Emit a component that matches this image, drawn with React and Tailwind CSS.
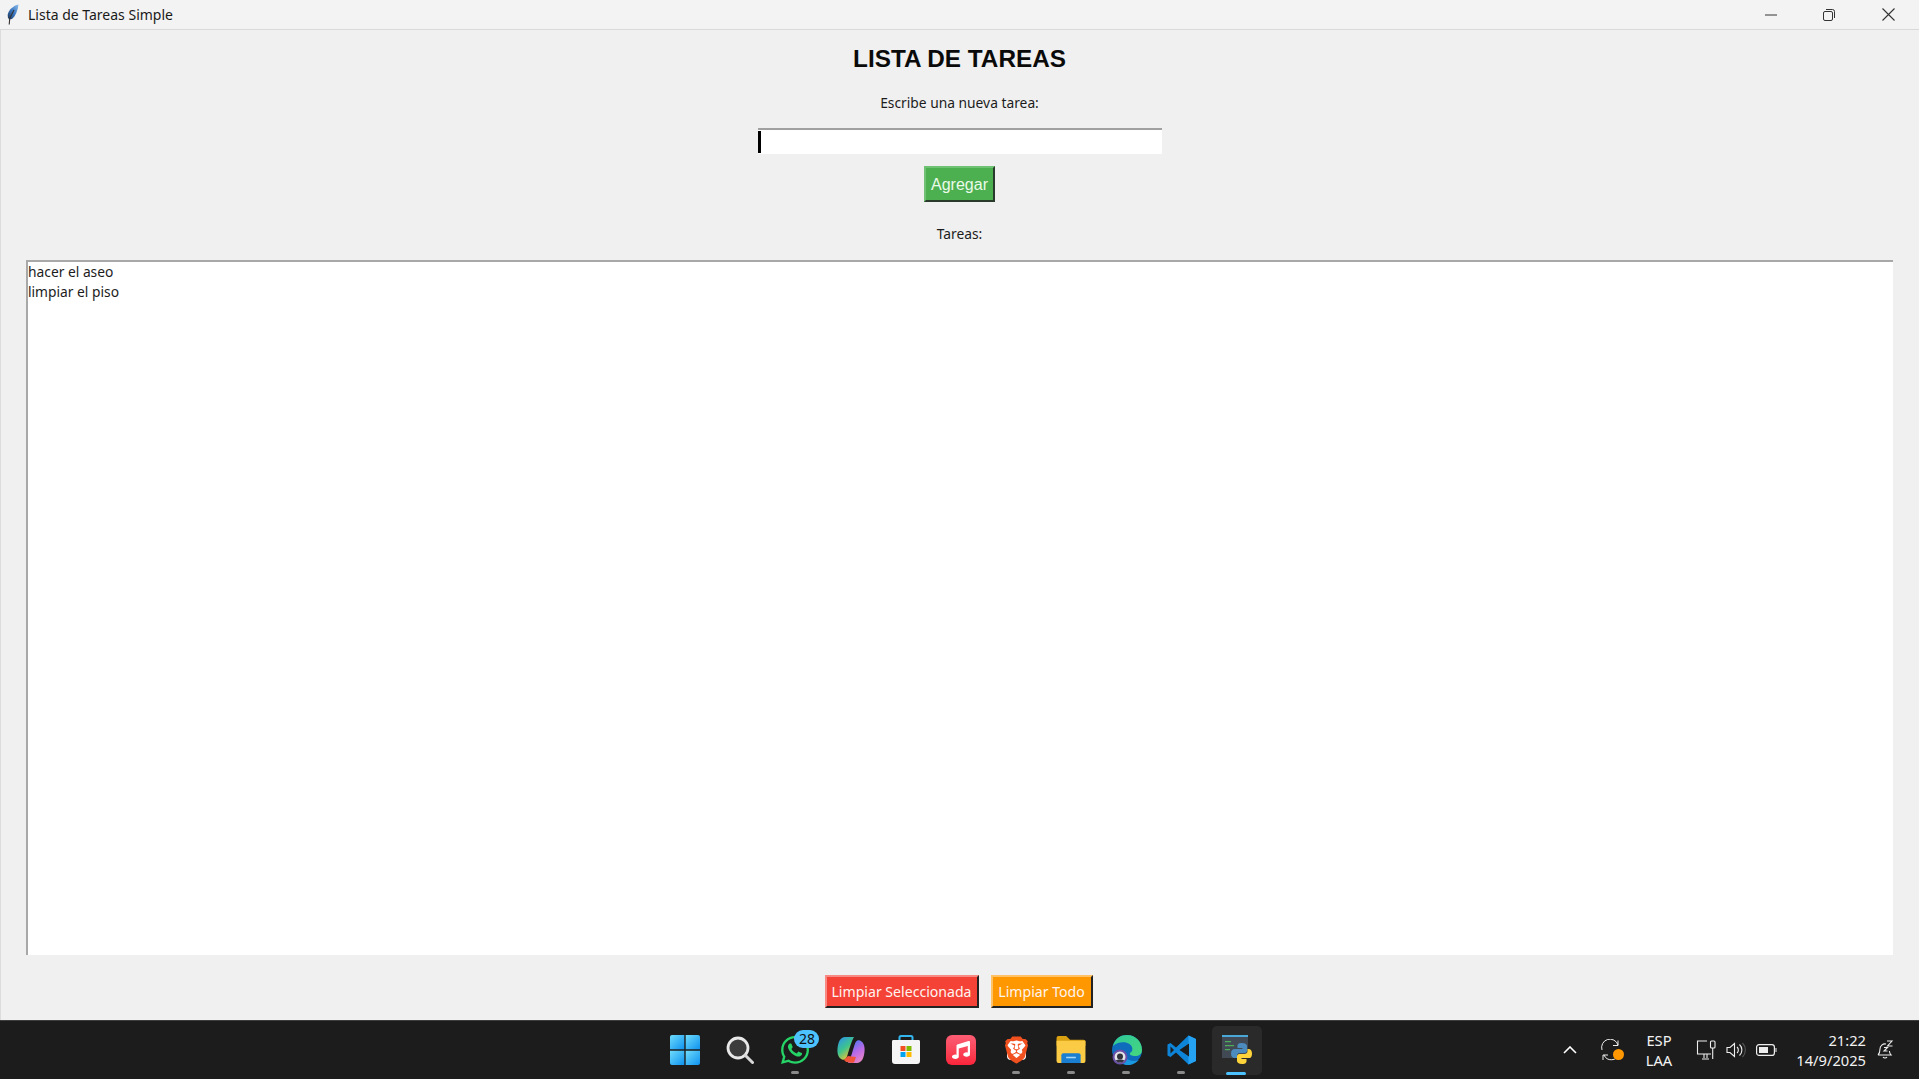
import React from "react";
import { FaWhatsapp, FaMusic } from "react-icons/fa";
import { SiBrave } from "react-icons/si";

const ui = { fontFamily: '"Noto Sans", "Open Sans", sans-serif' };

function Feather() {
  return (
    <svg width="12" height="21" viewBox="0 0 12 21" className="ml-[1px] shrink-0">
      <defs>
        <linearGradient id="fe" x1="1" y1="0" x2="0" y2="1">
          <stop offset="0" stopColor="#8fbde8" />
          <stop offset="0.5" stopColor="#3b78c4" />
          <stop offset="1" stopColor="#1c3557" />
        </linearGradient>
      </defs>
      <path d="M11.5 0.5C6.5 1.5 1.5 6 0.8 10.5 0.5 12.5 1 14 2 15.5L5 15C8.5 12 10.8 7 11.5 0.5Z" fill="url(#fe)" />
      <path d="M2.2 20.5L2.8 14 7 6" stroke="#333" strokeWidth="1.1" fill="none" />
    </svg>
  );
}

function TitleBar() {
  return (
    <div className="flex h-[30px] shrink-0 items-center border-b border-[#d9d9d9] bg-[#f3f3f3] pl-[6px]">
      <Feather />
      <span className="ml-[9px] text-[14px] text-[#1a1a1a]" style={ui}>Lista de Tareas Simple</span>
      <div className="ml-auto flex items-center pr-[2px]">
        <div className="flex h-[29px] w-[58px] items-center justify-center">
          <svg width="12" height="2"><path d="M0 1H12" stroke="#333" strokeWidth="1" /></svg>
        </div>
        <div className="flex h-[29px] w-[59px] items-center justify-center pr-[1px]">
          <svg width="12" height="12" viewBox="0 0 12 12" fill="none" stroke="#333" strokeWidth="1">
            <rect x="0.5" y="2.5" width="9" height="9" rx="1.5" />
            <path d="M3 0.5H9.5A2 2 0 0 1 11.5 2.5V9" />
          </svg>
        </div>
        <div className="flex h-[29px] w-[58px] items-center justify-center">
          <svg width="13" height="13" viewBox="0 0 13 13" fill="none" stroke="#333" strokeWidth="1.1">
            <path d="M0.5 0.5L12.5 12.5M12.5 0.5L0.5 12.5" />
          </svg>
        </div>
      </div>
    </div>
  );
}

function TkButton({ className, children }) {
  return (
    <button
      className={`flex h-[33px] items-center justify-center border-2 border-b-[#222] border-r-[#222] text-[14.1px] text-[#fff4f0] ${className}`}
      style={ui}
    >
      {children}
    </button>
  );
}

function Client() {
  return (
    <div className="flex min-h-0 flex-1 flex-col items-center border-l border-[#dcdcdc] bg-[#f0f0f0] pr-[26px] pl-[25px]">
      <h1
        className="mt-[15px] h-[28px] text-[24.3px] leading-[28px] font-bold text-[#0a0a0a]"
        style={{ fontFamily: '"Liberation Sans", Arial, sans-serif' }}
      >
        LISTA DE TAREAS
      </h1>
      <div className="mt-[20px] h-[20px] text-[13.8px] leading-[20px] text-[#1c1c1c]" style={ui}>Escribe una nueva tarea:</div>
      <div className="mt-[15px] flex h-[26px] w-[404px] items-center border-t-2 border-t-[#a0a0a0] bg-white">
        <div className="h-[22px] w-[3px] bg-black" />
      </div>
      <button
        className="mt-[12px] flex h-[36px] w-[71px] items-center justify-center border-2 border-t-[#6fc173] border-l-[#6fc173] border-b-[#2a3a2b] border-r-[#2a3a2b] bg-[#4caf50] pt-[1px] text-[16px] text-[#eafbe9]"
        style={{ fontFamily: '"Liberation Sans", Arial, sans-serif' }}
      >
        Agregar
      </button>
      <div className="mt-[22px] h-[20px] text-[13.8px] leading-[20px] text-[#1c1c1c]" style={ui}>Tareas:</div>
      <div className="mt-[16px] h-[695px] w-full border-t-2 border-l-2 border-t-[#a8a8a8] border-l-[#a8a8a8] bg-white text-[13.8px] leading-[20px] text-[#1c1c1c]" style={ui}>
        <div>hacer el aseo</div>
        <div>limpiar el piso</div>
      </div>
      <div className="mt-[20px] mr-[2px] flex gap-[12px]">
        <TkButton className="w-[154px] border-t-[#f98a83] border-l-[#f98a83] bg-[#f44336]">Limpiar Seleccionada</TkButton>
        <TkButton className="w-[102px] border-t-[#ffc266] border-l-[#ffc266] bg-[#ff9800]">Limpiar Todo</TkButton>
      </div>
    </div>
  );
}

function Start() {
  return (
    <svg width="30" height="30" viewBox="0 0 30 30">
      <defs>
        <linearGradient id="wn" x1="0" y1="0" x2="1" y2="1">
          <stop offset="0" stopColor="#6fdcfb" />
          <stop offset="1" stopColor="#0e92f0" />
        </linearGradient>
      </defs>
      <path d="M2 0H14.3V14.3H0V2A2 2 0 0 1 2 0Z" fill="url(#wn)" />
      <path d="M15.7 0H28A2 2 0 0 1 30 2V14.3H15.7Z" fill="url(#wn)" />
      <path d="M0 15.7H14.3V30H2A2 2 0 0 1 0 28Z" fill="url(#wn)" />
      <path d="M15.7 15.7H30V28A2 2 0 0 1 28 30H15.7Z" fill="url(#wn)" />
    </svg>
  );
}
function Search() {
  return (
    <svg width="28" height="28" viewBox="0 0 28 28" fill="none">
      <circle cx="12" cy="12" r="10" fill="#3c3c3c" stroke="#e8e8e8" strokeWidth="2.8" />
      <path d="M19.5 19.5L26.5 26.5" stroke="#d8d8d8" strokeWidth="3" strokeLinecap="round" />
    </svg>
  );
}
function Copilot() {
  return (
    <svg width="28" height="26" viewBox="0 0 28 26">
      <defs>
        <linearGradient id="cpa" x1="0" y1="0" x2="0.6" y2="1">
          <stop offset="0" stopColor="#2d8ff0" />
          <stop offset="0.55" stopColor="#3dc48d" />
          <stop offset="1" stopColor="#f5c232" />
        </linearGradient>
        <linearGradient id="cpb" x1="0.3" y1="0" x2="0.8" y2="1">
          <stop offset="0" stopColor="#4a78f0" />
          <stop offset="0.5" stopColor="#b86ae8" />
          <stop offset="1" stopColor="#f08ac0" />
        </linearGradient>
      </defs>
      <path d="M8 0H17C14.5 4 12 13 10.5 18 9.5 22 7.5 23.5 5 22.5 1.5 21 0 17 0.5 11.5 1 5 3.5 0 8 0Z" fill="url(#cpa)" />
      <path d="M20 26H11C13.5 22 16 13 17.5 8 18.5 4 20.5 2.5 23 3.5 26.5 5 28 9 27.5 14.5 27 21 24.5 26 20 26Z" fill="url(#cpb)" />
      <path d="M7 23C9 25.5 13 26 17 25.5L19 20 11 19Z" fill="#f0553a" />
    </svg>
  );
}
function Store() {
  return (
    <svg width="30" height="30" viewBox="0 0 30 30">
      <path d="M8.5 6V2.5A1.5 1.5 0 0 1 10 1H20A1.5 1.5 0 0 1 21.5 2.5V6" fill="none" stroke="#33b5ee" strokeWidth="2" />
      <path d="M2 5H28A1.5 1.5 0 0 1 29 6.5V26A3 3 0 0 1 26 29H4A3 3 0 0 1 1 26V6.5A1.5 1.5 0 0 1 2 5Z" fill="#f5f5f5" />
      <rect x="9.5" y="11" width="5" height="5" fill="#f25022" />
      <rect x="15.5" y="11" width="5" height="5" fill="#7fba00" />
      <rect x="9.5" y="17" width="5" height="5" fill="#00a4ef" />
      <rect x="15.5" y="17" width="5" height="5" fill="#ffb900" />
    </svg>
  );
}
function Music() {
  return (
    <div className="flex h-[30px] w-[30px] items-center justify-center rounded-[6px] bg-gradient-to-b from-[#fb5c74] to-[#fa233b]">
      <FaMusic className="text-[18px] text-white" />
    </div>
  );
}
function Brave() {
  return (
    <div className="relative h-[30px] w-[27px]">
      <div className="absolute inset-x-[4px] top-[4px] bottom-[5px] rounded-[4px] bg-white" />
      <SiBrave className="absolute inset-0 h-[30px] w-[27px] text-[#f1501f]" />
    </div>
  );
}
function Folder() {
  return (
    <svg width="30" height="27" viewBox="0 0 30 28">
      <path d="M0 2A2 2 0 0 1 2 0H10L14 4H28A2 2 0 0 1 30 6V10H0Z" fill="#d9a012" />
      <path d="M0 5H30V26A2 2 0 0 1 28 28H2A2 2 0 0 1 0 26Z" fill="#fbcb45" />
      <path d="M5 20A2 2 0 0 1 7 18H23A2 2 0 0 1 25 20V28H5Z" fill="#1a7fd0" />
      <rect x="10" y="21.5" width="10" height="1.6" fill="#a8d6f5" />
    </svg>
  );
}
function Edge() {
  return (
    <svg width="30" height="30" viewBox="0 0 30 30">
      <defs>
        <linearGradient id="edg" x1="0" y1="0" x2="1" y2="1">
          <stop offset="0" stopColor="#2ec89a" />
          <stop offset="1" stopColor="#47d67e" />
        </linearGradient>
      </defs>
      <circle cx="15" cy="15" r="15" fill="#0f6cbd" />
      <path d="M1 11C3 3 9 0 15 0 24 0 30 7 30 15 30 19 27 21 23 21 20 21 17 20 18 18 20 17 21 15 20 12 18 7 8 5 1 11Z" fill="url(#edg)" />
      <path d="M14 30C8 28 7 22 10 17 12 24 19 28 27 25 24 28 19 31 14 30Z" fill="#1a98e0" />
      <circle cx="8" cy="22" r="7.5" fill="#6a4fa8" />
      <circle cx="8" cy="22" r="5.5" fill="#e4e4e8" />
      <circle cx="8" cy="21.5" r="3" fill="#33333d" />
      <path d="M3.5 25.5C5 24 11 24 12.5 25.5L10 27.5H6Z" fill="#33333d" />
    </svg>
  );
}
function VSCode() {
  return (
    <svg width="30" height="30" viewBox="0 0 30 30">
      <path d="M21.5 0.5L29 4V26L21.5 29.5 9 17.5 3.5 22 0.5 20.5V9.5L3.5 8 9 12.5Z" fill="#0d84d8" />
      <path d="M21.5 0.5L29 4V26L21.5 29.5Z" fill="#25a2f2" />
      <path d="M22 8.5L12.5 15 22 21.5Z" fill="#1c1c1c" />
      <path d="M3.5 11.5L7 15 3.5 18.5Z" fill="#1c1c1c" />
    </svg>
  );
}
function Python() {
  return (
    <svg width="30" height="30" viewBox="0 0 30 30">
      <rect x="0" y="0" width="26" height="23" fill="#414a54" />
      <rect x="0" y="0" width="26" height="2" fill="#4aa8d8" />
      <rect x="3" y="6" width="6" height="1.2" fill="#4fae5a" />
      <rect x="3" y="10" width="9" height="1.2" fill="#4fae5a" />
      <rect x="3" y="14" width="5" height="1.2" fill="#4fae5a" />
      <path d="M20 8C16 8 15.5 9.5 15.5 11V13H20.5V14H12.5C10.5 14 9 15.5 9 18.5S10.5 23 12.5 23H15V20.5C15 19 16 18 17.5 18H22.5C24 18 25 17 25 15.5V11C25 9.5 23.5 8 20 8Z" fill="#4b8bbe" />
      <path d="M20 29C24 29 24.5 27.5 24.5 26V24H19.5V23H27.5C29.5 23 30 20.5 30 18.5S29 14 27 14H25.5V16.5C25.5 18 24 19 22.5 19H17.5C16 19 15 20 15 21.5V26C15 27.5 16.5 29 20 29Z" fill="#ffd43b" />
    </svg>
  );
}
function Whatsapp() {
  return (
    <div className="relative h-[32px] w-[32px]">
      <FaWhatsapp className="h-[32px] w-[32px] text-[#25d366]" />
      <div
        className="absolute top-[-4px] right-[-8px] flex h-[18px] w-[25px] items-center justify-center rounded-full bg-[#4cc2ff] text-[14px] leading-[18px] text-[#101010]"
        style={ui}
      >
        28
      </div>
    </div>
  );
}

function Cell({ children, dot, active }) {
  return (
    <div className="relative flex h-[49px] w-[55.2px] items-center justify-center">
      {active && <div className="absolute inset-y-0 inset-x-[3px] rounded-[5px] bg-[#2a2a2a]" />}
      <div className="relative mb-[1px]">{children}</div>
      {dot && <div className="absolute bottom-[1px] left-[23px] h-[3px] w-[8px] rounded-full bg-[#8a8a8a]" />}
      {active && <div className="absolute bottom-0 left-[17px] h-[3px] w-[20px] rounded-full bg-[#4cc2ff]" />}
    </div>
  );
}

function Taskbar() {
  return (
    <div className="grid h-[59px] shrink-0 grid-cols-[1fr_auto_1fr] items-center border-t border-[#3e3e3e] bg-[#1c1c1c]" style={ui}>
      <div />
      <div className="ml-[3px] flex">
        <Cell><Start /></Cell>
        <Cell><Search /></Cell>
        <Cell dot><Whatsapp /></Cell>
        <Cell><Copilot /></Cell>
        <Cell><Store /></Cell>
        <Cell><Music /></Cell>
        <Cell dot><Brave /></Cell>
        <Cell dot><Folder /></Cell>
        <Cell dot><Edge /></Cell>
        <Cell dot><VSCode /></Cell>
        <Cell active><Python /></Cell>
      </div>
      <div className="flex items-center justify-end pr-[25px] text-white">
        <svg width="14" height="8" viewBox="0 0 14 8" fill="none" stroke="#fff" strokeWidth="1.6" className="mr-[24px]">
          <path d="M1 7L7 1L13 7" />
        </svg>
        <div className="relative mr-[23px] h-[22px] w-[22px]">
          <svg width="20" height="22" viewBox="0 0 20 22" fill="none" stroke="#eee" strokeWidth="1">
            <path d="M1 11A8 8 0 0 1 17 6" />
            <path d="M17 1.5V6.5H12" />
            <path d="M18 15A8 8 0 0 1 3 16" />
            <path d="M2 21V16H7" />
          </svg>
          <div className="absolute right-[-1px] bottom-[1px] h-[11px] w-[11px] rounded-full bg-[#ff9800]" />
        </div>
        <div className="mr-[24px] flex flex-col items-center text-[14.7px] leading-[20px] text-[#f2f2f2]">
          <span>ESP</span>
          <span>LAA</span>
        </div>
        <svg width="20" height="20" viewBox="0 0 20 20" fill="none" stroke="#eee" strokeWidth="1.1" className="mr-[10px]">
          <path d="M11 1H1.5V14H15" />
          <path d="M6 19H13M8 14V18M11 14V18" />
          <rect x="14.5" y="1" width="4.5" height="7" rx="1" />
          <path d="M16.7 8V19" />
        </svg>
        <svg width="20" height="16" viewBox="0 0 20 16" fill="none" stroke="#eee" strokeWidth="1.1" className="mr-[10px]">
          <path d="M1 5.5H4L8.5 1.5V14.5L4 10.5H1Z" />
          <path d="M11 5A4 4 0 0 1 11 11" />
          <path d="M13.5 2.5A7.5 7.5 0 0 1 13.5 13.5" />
          <path d="M16.5 1A10 10 0 0 1 16.5 15" stroke="#555" />
        </svg>
        <svg width="21" height="12" viewBox="0 0 21 12" className="mr-[19px]">
          <rect x="0.6" y="0.6" width="17.8" height="10.8" rx="2.5" fill="none" stroke="#eee" strokeWidth="1.2" />
          <rect x="3" y="3" width="9" height="6" fill="#eee" />
          <path d="M19.5 4H20.5V8H19.5Z" fill="#eee" />
        </svg>
        <div className="mr-[11px] flex flex-col items-end text-[14.7px] leading-[20px] text-[#f2f2f2]">
          <span>21:22</span>
          <span>14/9/2025</span>
        </div>
        <svg width="17" height="20" viewBox="0 0 17 20" fill="none" stroke="#eee" strokeWidth="1.1">
          <path d="M1 15C3 13 3 11 3 9A5 5 0 0 1 9 4M1 15H14C13 14 12.5 13 12.4 11" />
          <path d="M6 17A2.5 2.5 0 0 0 10 17" />
          <path d="M10 1H15L10.5 6H15.5" />
          <path d="M7 7.5H10.5L7 11H10.5" />
        </svg>
      </div>
    </div>
  );
}

export default function App() {
  return (
    <div className="flex h-[1079px] w-full flex-col overflow-hidden">
      <TitleBar />
      <Client />
      <Taskbar />
    </div>
  );
}
